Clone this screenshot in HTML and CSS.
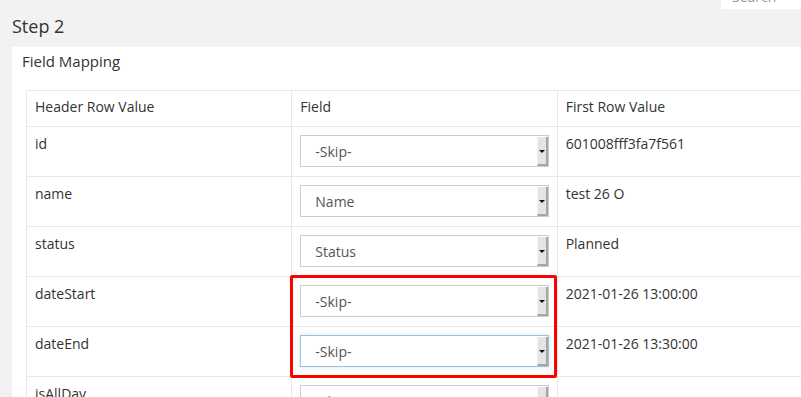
FILE: index.html
```html
<!DOCTYPE html>
<html lang="en">

<head>
    <meta charset="UTF-8">
    <meta name="viewport" content="width=device-width, initial-scale=1.0">
    <title>Import - Step 2</title>
    <link rel="stylesheet" href="styles.css">
</head>

<body>
    <div class="top-bar">
        <div class="search"><span class="search-text">Search</span></div>
    </div>
    <div class="page">
        <h4 class="step-title">Step 2</h4>
        <div class="panel">
            <div class="panel-heading">Field Mapping</div>
            <div class="panel-body">
                <div class="table-wrap">
                    <table class="mapping">
                        <thead>
                            <tr>
                                <th>Header Row Value</th>
                                <th>Field</th>
                                <th>First Row Value</th>
                            </tr>
                        </thead>
                        <tbody>
                            <tr>
                                <td>id</td>
                                <td><div class="select"><span class="select-text">-Skip-</span><span class="select-btn"></span></div></td>
                                <td>601008fff3fa7f561</td>
                            </tr>
                            <tr>
                                <td>name</td>
                                <td><div class="select"><span class="select-text">Name</span><span class="select-btn"></span></div></td>
                                <td>test 26 O</td>
                            </tr>
                            <tr>
                                <td>status</td>
                                <td><div class="select"><span class="select-text">Status</span><span class="select-btn"></span></div></td>
                                <td>Planned</td>
                            </tr>
                            <tr>
                                <td>dateStart</td>
                                <td><div class="select"><span class="select-text">-Skip-</span><span class="select-btn"></span></div></td>
                                <td>2021-01-26 13:00:00</td>
                            </tr>
                            <tr>
                                <td>dateEnd</td>
                                <td><div class="select focused"><span class="select-text">-Skip-</span><span class="select-btn"></span></div></td>
                                <td>2021-01-26 13:30:00</td>
                            </tr>
                            <tr>
                                <td>isAllDay</td>
                                <td><div class="select"><span class="select-text">-Skip-</span><span class="select-btn"></span></div></td>
                                <td></td>
                            </tr>
                        </tbody>
                    </table>
                    <div class="highlight"></div>
                </div>
            </div>
        </div>
    </div>
</body>
</html>
```

FILE: styles.css
```css
html, body {
    margin: 0;
    padding: 0;
    height: 100%;
    overflow: hidden;
}

body {
    font-family: 'Open Sans', 'Noto Sans', sans-serif;
    font-size: 14px;
    color: #333;
    background-color: #f2f2f2;
}

/* search box, scrolled mostly out of view */
.top-bar {
    display: flex;
    justify-content: flex-end;
    height: 9px;
}

.search {
    width: 69px;
    height: 9px;
    padding-left: 11px;
    background-color: #fff;
    color: #999;
    overflow: hidden;
}

.search-text {
    display: block;
    line-height: 20px;
    margin-top: -13px;
}

.page {
    padding-left: 12px;
    width: 830px;
}

.step-title {
    margin: 5px 0 9px;
    font-size: 18px;
    font-weight: normal;
    line-height: 24px;
}

.panel {
    background-color: #fff;
}

.panel-heading {
    padding: 4px 10px 0;
    font-size: 15px;
    line-height: 20px;
}

.panel-body {
    padding: 19px 14px 20px;
}

.table-wrap {
    position: relative;
}

.mapping {
    width: 797px;
    table-layout: fixed;
    border-collapse: collapse;
}

.mapping th,
.mapping td {
    border: 1px solid #e8e8e8;
    text-align: left;
    vertical-align: top;
    font-weight: normal;
    line-height: 19px;
}

.mapping th {
    padding: 6px 8px 9px;
    line-height: 20px;
}

.mapping td {
    padding: 7px 8px 9px;
    height: 33px;
}

.select {
    display: flex;
    height: 32px;
    margin-top: 1px;
    box-sizing: border-box;
    border: 1px solid #cdcdcd;
    background-color: #fff;
    color: #555;
}

.select.focused {
    border-color: #a9bfd6;
    box-shadow: 0 0 4px rgba(102, 175, 233, 0.35);
}

.select-text {
    flex: 1;
    padding-left: 14px;
    line-height: 30px;
    padding-top: 1px;
}

.select-btn {
    width: 8px;
    margin: 1px 0 0;
    background-color: #e4e4e4;
    border-left: 1px solid #f4f4f4;
    border-right: 2px solid #a6a6a6;
    border-bottom: 2px solid #a6a6a6;
    display: flex;
    justify-content: center;
    padding-top: 13px;
    box-sizing: content-box;
    height: 14px;
}

.select-btn::after {
    content: "";
    width: 0;
    height: 0;
    border-left: 3px solid transparent;
    border-right: 3px solid transparent;
    border-top: 3px solid #111;
}

/* red annotation frame */
.highlight {
    position: absolute;
    left: 264px;
    top: 185px;
    width: 261px;
    height: 97px;
    border: 3px solid #f00;
    border-radius: 2px;
}
```
